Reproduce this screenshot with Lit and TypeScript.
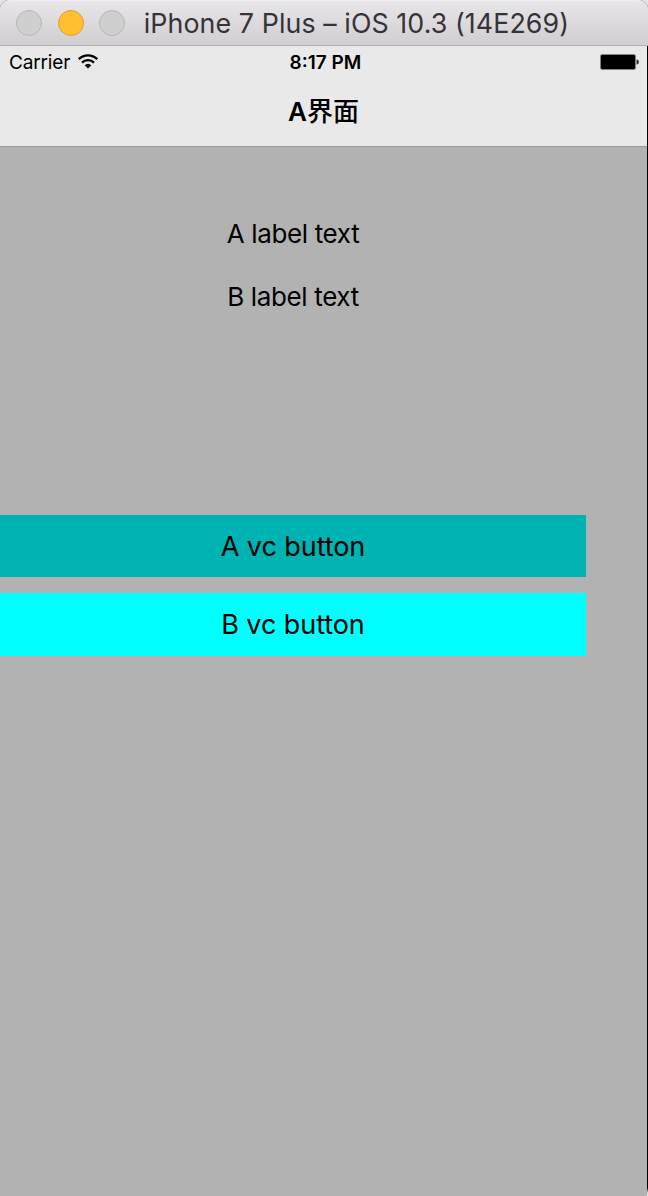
import { LitElement, html, css } from "lit";
import { customElement } from "lit/decorators.js";

@customElement("app-root")
export class AppRoot extends LitElement {
  static styles = css`
    :host {
      display: block;
      height: 1196px;
      overflow: hidden;
      background: #e4e4e4;
      color: #000;
      font-family: Inter, "Noto Sans CJK SC", sans-serif;
      white-space: nowrap;
    }
    .window {
      display: flex;
      flex-direction: column;
      height: 1196px;
    }
    .titlebar {
      box-sizing: border-box;
      flex: none;
      display: flex;
      align-items: center;
      height: 46px;
      padding-left: 16px;
      border-radius: 11px 11px 0 0;
      border-bottom: 1px solid #b1afb1;
      background: linear-gradient(#f4f2f4 0, #e8e5e8 2px, #d1ced1 100%);
      box-shadow: 0 0 0 1px #bbb;
    }
    .light {
      box-sizing: border-box;
      flex: none;
      width: 26px;
      height: 26px;
      margin-right: 15.6px;
      border: 1px solid #b7b5b7;
      border-radius: 50%;
      background: #d0cfd0;
    }
    .light.on {
      border-color: #dfa032;
      background: #ffbf2f;
    }
    .title {
      margin-left: 3px;
      font-size: 26.8px;
      letter-spacing: 0.08px;
      line-height: 32px;
      padding-top: 1px;
      color: #353337;
    }
    .device {
      flex: 1;
      display: grid;
      grid-template-columns: 1fr 1px;
      background: #b2b2b2;
    }
    .edge {
      background: linear-gradient(#000 0, #000 1142px, #ddd 1147px, #eee 100%);
    }
    .header {
      box-sizing: border-box;
      height: 101px;
      background: #e9e9e9;
      border-bottom: 1px solid #999;
    }
    .status {
      display: grid;
      grid-template-columns: 1fr auto 1fr;
      align-items: center;
      height: 32px;
      padding: 0 8px 0 9px;
      font-size: 19px;
    }
    .carrier {
      display: flex;
      align-items: center;
      gap: 8px;
      letter-spacing: -0.15px;
    }
    .time {
      font-weight: 600;
      padding-left: 3px;
    }
    .battery {
      justify-self: end;
    }
    svg {
      display: block;
    }
    .nav {
      display: flex;
      justify-content: center;
      align-items: center;
      height: 63px;
      font-size: 26px;
      font-weight: 600;
    }
    .cjk {
      font-weight: 500;
    }
    .content {
      width: 586px;
      padding-top: 56px;
      text-align: center;
      font-size: 26px;
    }
    .label {
      height: 62.5px;
      line-height: 62px;
      letter-spacing: -0.35px;
    }
    .buttons {
      display: flex;
      flex-direction: column;
      gap: 16px;
      padding-top: 187px;
    }
    .button {
      height: 62.4px;
      line-height: 63px;
      background: #00ffff;
      font-size: 27px;
      letter-spacing: -0.07px;
    }
    .button.dim {
      background: #00b3b3;
    }
  `;

  render() {
    return html`
      <div class="window">
        <div class="titlebar">
          <span class="light"></span>
          <span class="light on"></span>
          <span class="light"></span>
          <span class="title">iPhone 7 Plus – iOS 10.3 (14E269)</span>
        </div>
        <div class="device">
          <div class="screen">
            <div class="header">
              <div class="status">
                <div class="carrier">
                  <span class="name">Carrier</span>
                  <svg width="20" height="16" viewBox="0 0 20 16">
                    <g fill="none" stroke="#000" stroke-width="2.4">
                      <path d="M0.8 5.2 A12.9 12.9 0 0 1 19.2 5.2" />
                      <path d="M4 8.6 A8.5 8.5 0 0 1 16 8.6" />
                    </g>
                    <path d="M6.6 11.2 A5.1 5.1 0 0 1 13.4 11.2 L10 14.6 Z" />
                  </svg>
                </div>
                <span class="time">8:17 PM</span>
                <svg class="battery" width="39" height="16" viewBox="0 0 39 16">
                  <rect x="0.5" y="0.5" width="35" height="15" rx="1.8" fill="#000" stroke="#858585" />
                  <path d="M36.5 5.2 Q39 5.8 39 8 Q39 10.2 36.5 10.8 Z" fill="#333" />
                </svg>
              </div>
              <div class="nav"><span class="heading">A<span class="cjk">界面</span></span></div>
            </div>
            <div class="content">
              <div class="label"><span>A label text</span></div>
              <div class="label"><span>B label text</span></div>
              <div class="buttons">
                <div class="button dim"><span>A vc button</span></div>
                <div class="button"><span>B vc button</span></div>
              </div>
            </div>
          </div>
          <div class="edge"></div>
        </div>
      </div>
    `;
  }
}
